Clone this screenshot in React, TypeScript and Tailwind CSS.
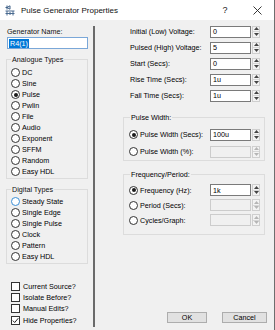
import React from "react";

const Radio = ({ checked, hover }: { checked?: boolean; hover?: boolean }) => (
  <span
    className={`inline-flex items-center justify-center w-[9px] h-[9px] rounded-full border bg-white shrink-0 ${
      hover ? "border-[#3b8fd6]" : "border-[#333333]"
    }`}
  >
    {checked && <span className="w-[4px] h-[4px] rounded-full bg-[#1a1a1a]" />}
  </span>
);

const Check = ({ checked }: { checked?: boolean }) => (
  <span className="inline-flex items-center justify-center w-[9px] h-[9px] border border-[#333333] bg-white shrink-0">
    {checked && (
      <svg width="7" height="7" viewBox="0 0 7 7">
        <path d="M0.8 3.6 L2.7 5.5 L6.3 1.2" stroke="#222" strokeWidth="1" fill="none" />
      </svg>
    )}
  </span>
);

const Spin = ({ disabled }: { disabled?: boolean }) => {
  const c = disabled ? "#b5b5b5" : "#444";
  return (
    <div className="w-[8px] h-[12px] ml-[1px] flex flex-col border border-[#cfcfcf] bg-[#f3f3f3] shrink-0">
      <div className="flex-1 flex items-center justify-center">
        <svg width="5" height="3" viewBox="0 0 5 3">
          <path d="M0 3 L2.5 0 L5 3Z" fill={c} />
        </svg>
      </div>
      <div className="h-px bg-[#d6d6d6]" />
      <div className="flex-1 flex items-center justify-center">
        <svg width="5" height="3" viewBox="0 0 5 3">
          <path d="M0 0 L2.5 3 L5 0Z" fill={c} />
        </svg>
      </div>
    </div>
  );
};

const Field = ({ value, disabled }: { value?: string; disabled?: boolean }) => (
  <div className="flex items-center">
    <div
      className={`w-[41px] h-[12px] border flex items-center px-[2px] ${
        disabled ? "border-[#cccccc] bg-[#f0f0f0]" : "border-[#7a7a7a] bg-white"
      }`}
    >
      {value}
    </div>
    <Spin disabled={disabled} />
  </div>
);

const analogue = ["DC", "Sine", "Pulse", "Pwlin", "File", "Audio", "Exponent", "SFFM", "Random", "Easy HDL"];
const digital = ["Steady State", "Single Edge", "Single Pulse", "Clock", "Pattern", "Easy HDL"];
const checks = ["Current Source?", "Isolate Before?", "Manual Edits?", "Hide Properties?"];
const topRows: [string, string][] = [
  ["Initial (Low) Voltage:", "0"],
  ["Pulsed (High) Voltage:", "5"],
  ["Start (Secs):", "0"],
  ["Rise Time (Secs):", "1u"],
  ["Fall Time (Secs):", "1u"],
];

export default function App() {
  return (
    <div
      className="w-[275px] h-[330px] bg-[#f0f0f0] flex flex-col overflow-hidden text-[#000] border-r border-[#6e6e6e]"
      style={{ fontFamily: '"Liberation Sans", Arial, sans-serif', fontSize: "7.2px", lineHeight: "9px" }}
    >
      {/* Title bar */}
      <div className="h-[20px] bg-white flex items-center shrink-0">
        <svg className="ml-[5px]" width="10" height="11" viewBox="0 0 10 11">
          <path d="M2 0.5 V4.5 M0.5 2.5 H2 M2 2.5 L5 0.8 M2 2.5 L5 4.2 M5 0.8 V4.2" stroke="#3d5f86" strokeWidth="1" fill="none" />
          <path d="M0.5 6 H9.5 M2 6 V10.5 M5 7 V10 M8 6 V10.5 M0.5 8.5 H9.5" stroke="#4a6b90" strokeWidth="1" fill="none" />
        </svg>
        <span className="ml-[6px] text-[8px] text-[#111]">Pulse Generator Properties</span>
        <span className="ml-auto w-[10px] text-center text-[9px] text-[#222]">?</span>
        <svg className="ml-[23px] mr-[12px]" width="9" height="9" viewBox="0 0 9 9">
          <path d="M0.5 0.5 L8.5 8.5 M8.5 0.5 L0.5 8.5" stroke="#222" strokeWidth="0.9" />
        </svg>
      </div>

      {/* Body */}
      <div className="flex flex-1 min-h-0">
        {/* Left column */}
        <div className="w-[93px] shrink-0 flex flex-col pt-[7px]">
          <div className="pl-[7px] text-[#111]">Generator Name:</div>
          <div className="ml-[7px] mt-[1px] w-[81px] h-[12px] border border-[#7aa7d8] bg-white flex items-center pl-[1px]">
            <span className="bg-[#0078d7] text-white px-[1px]">R4(1)</span>
          </div>

          <fieldset className="ml-[6px] mt-[6px] w-[82px] border border-[#dcdcdc] pl-[4px] pb-[1px]">
            <legend className="px-[1px] text-[#111]">Analogue Types</legend>
            <div className="pt-[3px] flex flex-col">
              {analogue.map((t) => (
                <div key={t} className="h-[11px] flex items-center gap-[2px]">
                  <Radio checked={t === "Pulse"} />
                  <span>{t}</span>
                </div>
              ))}
            </div>
          </fieldset>

          <fieldset className="ml-[6px] mt-[6px] w-[82px] border border-[#dcdcdc] pl-[4px] pb-[1px]">
            <legend className="px-[1px] text-[#111]">Digital Types</legend>
            <div className="pt-[2px] flex flex-col">
              {digital.map((t, i) => (
                <div key={t + i} className="h-[11px] flex items-center gap-[2px]">
                  <Radio hover={i === 0} />
                  <span>{t}</span>
                </div>
              ))}
            </div>
          </fieldset>

          <div className="mt-[17px] pl-[11px] flex flex-col">
            {checks.map((t, i) => (
              <div key={t} className={`h-[11px] flex items-center gap-[3px] ${i === 3 ? "mt-[1px]" : ""}`}>
                <Check checked={i === 3} />
                <span>{t}</span>
              </div>
            ))}
          </div>
        </div>

        {/* Divider */}
        <div className="w-[2px] bg-[#6a6a6a] mt-[6px] mb-[3px] shrink-0" />

        {/* Right column */}
        <div className="flex-1 flex flex-col pt-[3.5px] pl-[28px]">
          {topRows.map(([l, v]) => (
            <div key={l} className="h-[16px] flex items-center pl-[7px]">
              <span className="w-[80px]">{l}</span>
              <Field value={v} />
            </div>
          ))}

          <fieldset className="mt-[9px] w-[142px] border border-[#dcdcdc] pl-[5px]">
            <legend className="px-[1px] ml-[1px]">Pulse Width:</legend>
            <div className="pt-[5px] flex flex-col gap-[1px]">
              <div className="h-[16px] flex items-center">
                <span className="w-[81px] flex items-center gap-[2px]">
                  <Radio checked />
                  <span>Pulse Width (Secs):</span>
                </span>
                <Field value="100u" />
              </div>
              <div className="h-[16px] flex items-center">
                <span className="w-[81px] flex items-center gap-[2px]">
                  <Radio />
                  <span>Pulse Width (%):</span>
                </span>
                <Field disabled />
              </div>
            </div>
          </fieldset>

          <fieldset className="mt-[9px] w-[142px] border border-[#dcdcdc] pl-[5px] pb-[6px]">
            <legend className="px-[1px] ml-[1px]">Frequency/Period:</legend>
            <div className="pt-[4px] flex flex-col">
              {[
                ["Frequency (Hz):", "1k", true],
                ["Period (Secs):", "", false],
                ["Cycles/Graph:", "", false],
              ].map(([l, v, on]) => (
                <div key={l as string} className="h-[15px] flex items-center">
                  <span className="w-[81px] flex items-center gap-[2px]">
                    <Radio checked={on as boolean} />
                    <span>{l as string}</span>
                  </span>
                  <Field value={v as string} disabled={!on} />
                </div>
              ))}
            </div>
          </fieldset>

          <div className="mt-auto mb-[7px] flex gap-[15px] pl-[44px]">
            <button className="w-[40px] h-[11px] bg-[#e1e1e1] border border-[#adadad] flex items-center justify-center">
              OK
            </button>
            <button className="w-[45px] h-[11px] bg-[#e1e1e1] border border-[#adadad] flex items-center justify-center">
              Cancel
            </button>
          </div>
        </div>
      </div>
    </div>
  );
}
